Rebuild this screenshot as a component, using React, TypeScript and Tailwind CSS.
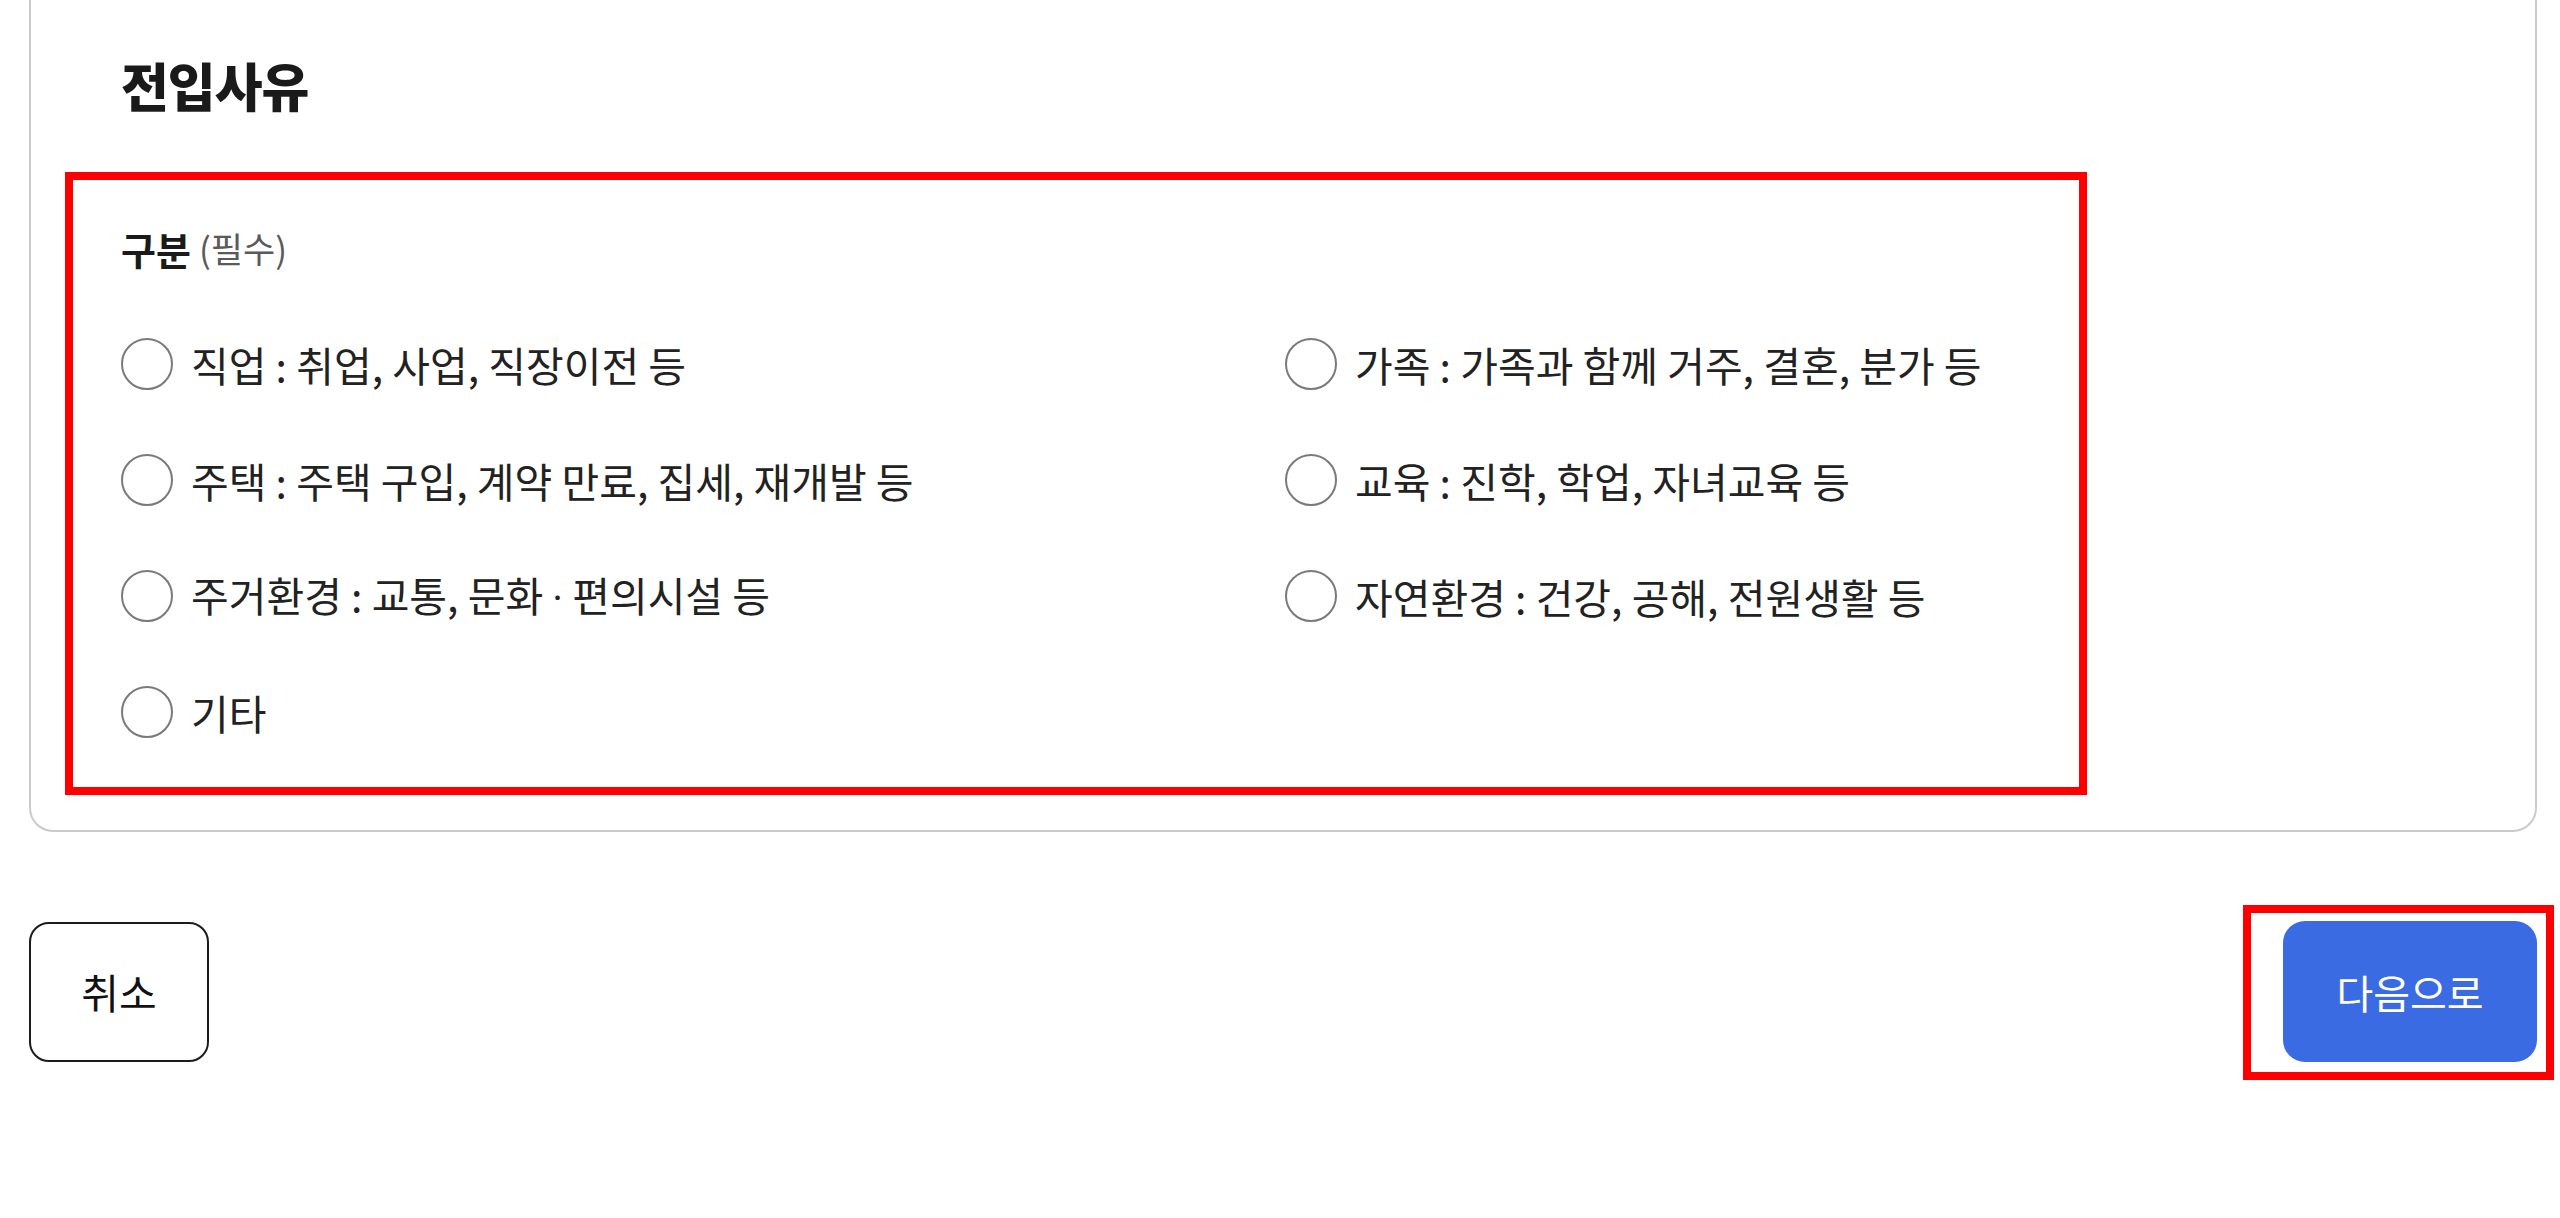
import React from "react";

const left = [
  "직업 : 취업, 사업, 직장이전 등",
  "주택 : 주택 구입, 계약 만료, 집세, 재개발 등",
  "주거환경 : 교통, 문화 · 편의시설 등",
  "기타",
];
const right = [
  "가족 : 가족과 함께 거주, 결혼, 분가 등",
  "교육 : 진학, 학업, 자녀교육 등",
  "자연환경 : 건강, 공해, 전원생활 등",
];

function Label({ text }: { text: string }) {
  const parts = text.split("·");
  if (parts.length === 1) return <>{text}</>;
  return (
    <>
      {parts[0]}
      <span style={{ fontFamily: 'Roboto, "Noto Sans", sans-serif' }}>·</span>
      {parts[1]}
    </>
  );
}

function Radio({ label }: { label: string }) {
  return (
    <label className="flex h-[116px] items-center gap-[18px]">
      <span className="h-[52px] w-[52px] shrink-0 rounded-full border-2 border-[#7a7a7a] bg-white" />
      <span className="text-[41px] leading-none text-[#222222]">
        <Label text={label} />
      </span>
    </label>
  );
}

export default function App() {
  return (
    <div
      className="h-[1218px] w-full overflow-hidden bg-white pl-[29px] pr-[23px]"
      style={{ fontFamily: '"Noto Sans CJK KR", "Noto Sans", sans-serif' }}
    >
      <div className="rounded-b-[24px] border-x-2 border-b-2 border-[#cacaca] pb-[35px] pl-[34px] pt-[55px]">
        <h2 className="h-[60px] pl-[56px] text-[52px] font-black leading-[60px] tracking-[-1px] text-[#1a1a1a]">
          전입사유
        </h2>
        <div className="mt-[57px] w-[2022px] border-[8px] border-[#ff0000] pb-[17px] pl-[48px] pt-[42px]">
          <div className="flex h-[52px] items-center gap-[8px]">
            <span className="text-[38px] font-bold text-[#1a1a1a]">구분</span>
            <span className="text-[35px] text-[#5a5a5a]">(필수)</span>
          </div>
          <div className="mt-[32px] grid grid-cols-[1164px_1fr]">
            <div className="flex flex-col">
              {left.map((l) => (
                <Radio key={l} label={l} />
              ))}
            </div>
            <div className="flex flex-col">
              {right.map((l) => (
                <Radio key={l} label={l} />
              ))}
            </div>
          </div>
        </div>
      </div>
      <div className="mt-[89px] flex items-center justify-between">
        <button className="flex h-[140px] w-[180px] items-center justify-center rounded-[20px] border-2 border-[#1c1c1c] bg-white text-[41px] text-[#111111]">
          취소
        </button>
        <div className="relative">
          <button className="flex h-[141px] w-[254px] items-center justify-center rounded-[22px] bg-[#3b6be3] text-[40px] text-white">
            다음으로
          </button>
          <div className="pointer-events-none absolute -bottom-[18px] -left-[40px] -right-[17px] -top-[16px] border-[8px] border-[#ff0000]" />
        </div>
      </div>
    </div>
  );
}
